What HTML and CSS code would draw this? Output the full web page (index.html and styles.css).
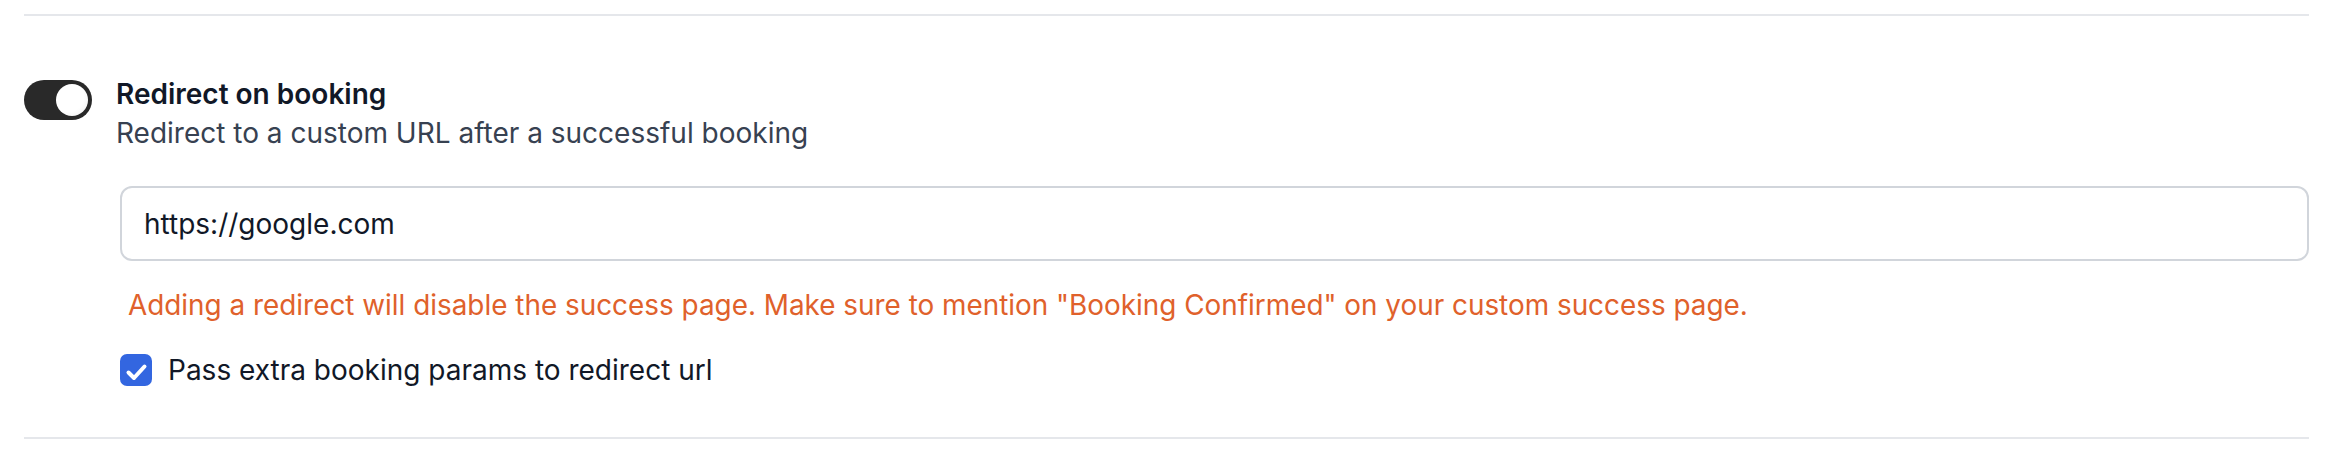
FILE: index.html
```html
<!DOCTYPE html>
<html lang="en">
<head>
<meta charset="utf-8">
<title>Redirect on booking</title>
<link rel="stylesheet" href="styles.css">
</head>
<body>
<div class="page">
  <section class="setting">
    <div class="setting-head">
      <button class="switch" type="button" aria-pressed="true"><span class="knob"></span></button>
      <div class="setting-text">
        <div class="setting-title">Redirect on booking</div>
        <div class="setting-desc">Redirect to a custom URL after a successful booking</div>
      </div>
    </div>
    <div class="details">
      <div class="field">https://google.com</div>
      <p class="warning">Adding a redirect will disable the success page. Make sure to mention "Booking Confirmed" on your custom success page.</p>
      <label class="check-row">
        <span class="checkbox">
          <svg viewBox="0 0 32 32" width="32" height="32"><path d="M8.5 18.5 L14 24 L24.5 12.5" fill="none" stroke="#fff" stroke-width="4" stroke-linecap="round" stroke-linejoin="round"/></svg>
        </span>
        <span class="check-label">Pass extra booking params to redirect url</span>
      </label>
    </div>
  </section>
</div>
</body>
</html>
```
FILE: styles.css
```css
* { box-sizing: border-box; }
html, body {
  margin: 0;
  padding: 0;
  background: #ffffff;
}
body {
  font-family: Inter, "Noto Sans", sans-serif;
  color: #111827;
}
.page {
  padding: 14px 33px 0 24px;
}
.setting {
  border-top: 2px solid #e5e7eb;
  border-bottom: 2px solid #e5e7eb;
  padding: 64px 0 47px 0;
}
.setting-head {
  display: flex;
  align-items: flex-start;
  gap: 24px;
}
.switch {
  flex: none;
  width: 68px;
  height: 40px;
  border: none;
  border-radius: 20px;
  background: #292929;
  padding: 0 4px;
  margin: 0;
  display: flex;
  align-items: center;
  justify-content: flex-end;
}
.knob {
  width: 32px;
  height: 32px;
  border-radius: 50%;
  background: radial-gradient(circle at 40% 40%, #ffffff 55%, #ececec 100%);
}
.setting-text {
  display: flex;
  flex-direction: column;
  gap: 5px;
}
.setting-title {
  font-size: 28px;
  line-height: 28px;
  font-weight: 600;
  color: #111827;
}
.setting-desc {
  font-size: 28px;
  line-height: 40px;
  color: #374151;
}
.details {
  padding-left: 96px;
  margin-top: 33px;
  display: flex;
  flex-direction: column;
}
.field {
  height: 75px;
  border: 2px solid #d1d5db;
  border-radius: 12px;
  padding: 0 22px;
  display: flex;
  align-items: center;
  font-size: 28px;
  color: #111827;
}
.warning {
  margin: 24px 0 0 0;
  padding-left: 8px;
  font-size: 27.88px;
  line-height: 40px;
  color: #e0612b;
}
.check-row {
  margin-top: 25px;
  display: flex;
  align-items: center;
  gap: 16px;
}
.checkbox {
  flex: none;
  width: 32px;
  height: 32px;
  border-radius: 7px;
  background: #3366e0;
  display: flex;
}
.check-label {
  font-size: 28px;
  line-height: 40px;
  color: #111827;
}
```
